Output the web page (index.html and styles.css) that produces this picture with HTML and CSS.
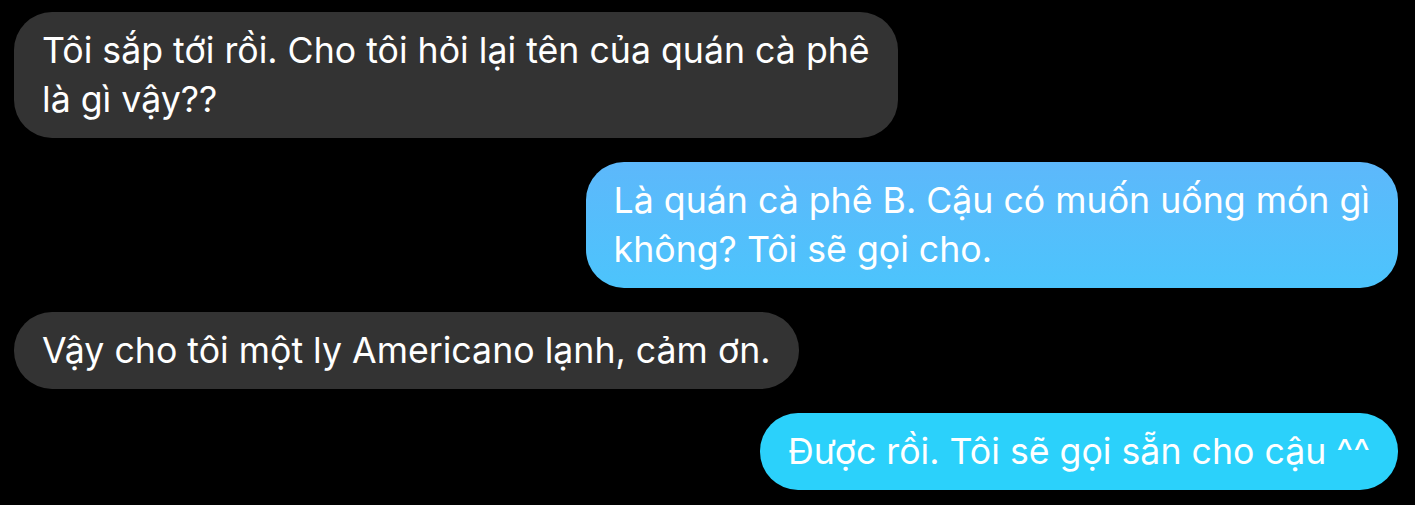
FILE: index.html
```html
<!DOCTYPE html>
<html lang="vi">
<head>
    <meta charset="UTF-8">
    <meta name="viewport" content="width=device-width, initial-scale=1.0">
    <title>Chat</title>
    <link rel="stylesheet" href="styles.css">
</head>
<body>
    <!-- Conversation -->
    <main class="chat">
        <div class="msg msg-them">Tôi sắp tới rồi. Cho tôi hỏi lại tên của quán cà phê<br>là gì vậy??</div>
        <div class="msg msg-me msg-me-top">Là quán cà phê B. Cậu có muốn uống món gì<br>không? Tôi sẽ gọi cho.</div>
        <div class="msg msg-them">Vậy cho tôi một ly Americano lạnh, cảm ơn.</div>
        <div class="msg msg-me msg-me-bottom">Được rồi. Tôi sẽ gọi sẵn cho cậu ^^</div>
    </main>
</body>
</html>
```

FILE: styles.css
```css
body {
    background-color: #000;
    font-family: Inter, "Noto Sans", sans-serif;
    margin: 0;
    padding: 0;
}

/* Conversation */
.chat {
    display: flex;
    flex-direction: column;
    gap: 24px;
    padding: 12px 17px 12px 14px;
}

.msg {
    width: fit-content;
    padding: 14px 28px;
    border-radius: 38px;
    color: #fff;
    font-size: 35.7px;
    line-height: 49px;
}

.msg-them {
    align-self: flex-start;
    background-color: #333333;
}

.msg-me {
    align-self: flex-end;
}

.msg-me-top {
    background: linear-gradient(180deg, #5db8fb, #4cc4fc);
}

.msg-me-bottom {
    background-color: #2bd1fb;
}
```
